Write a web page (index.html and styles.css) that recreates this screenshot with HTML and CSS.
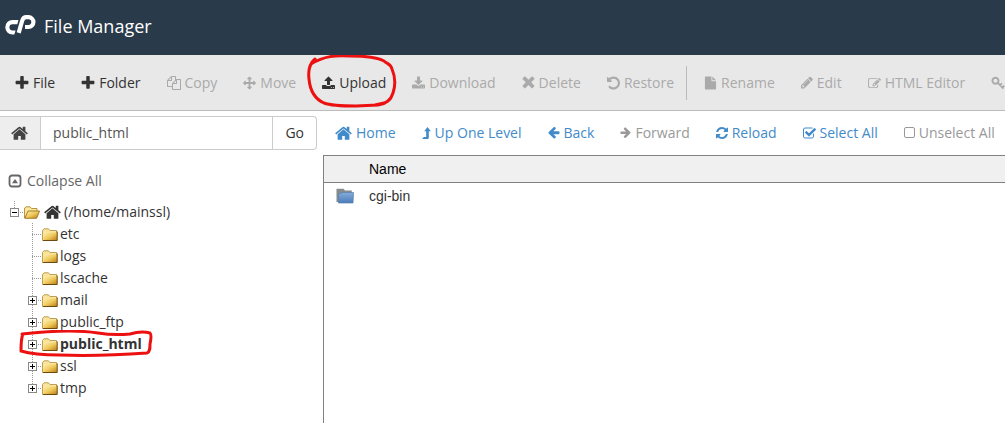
FILE: index.html
```html
<!DOCTYPE html>
<html lang="en">
<head>
<meta charset="utf-8">
<title>File Manager</title>
<link rel="stylesheet" href="styles.css">
</head>
<body>
<svg class="sprite" aria-hidden="true">
  <defs>
    <linearGradient id="gold" x1="0" y1="0" x2="1" y2="1"><stop offset="0" stop-color="#fff0ae"/><stop offset=".5" stop-color="#efc95c"/><stop offset="1" stop-color="#b97c12"/></linearGradient>
    <linearGradient id="blue" x1="0" y1="0" x2="0" y2="1"><stop offset="0" stop-color="#86acd8"/><stop offset="1" stop-color="#4a7cba"/></linearGradient>
  </defs>
  <symbol id="plus" viewBox="128 128 1536 1536"><path d="M1600 736v192q0 40-28 68t-68 28h-416v416q0 40-28 68t-68 28h-192q-40 0-68-28t-28-68v-416h-416q-40 0-68-28t-28-68v-192q0-40 28-68t68-28h416v-416q0-40 28-68t68-28h192q40 0 68 28t28 68v416h416q40 0 68 28t28 68z"/></symbol>
  <symbol id="home" viewBox="64 100 1664 1536"><path d="M1472 992v480q0 26-19 45t-45 19h-384v-384h-256v384h-384q-26 0-45-19t-19-45v-480q0-1 .5-3t.5-3l575-474 575 474q1 2 1 6zm223-69l-62 74q-8 9-21 11h-3q-13 0-21-7l-692-577-692 577q-12 8-24 7-13-2-21-11l-62-74q-8-10-7-23.500t11-21.500l719-599q32-26 76-26t76 26l244 204v-195q0-14 9-23t23-9h192q14 0 23 9t9 23v408l219 182q10 8 11 21.500t-7 23.500z"/></symbol>
  <symbol id="copy" viewBox="0 0 1792 1792"><path d="M1696 384q40 0 68 28t28 68v1216q0 40-28 68t-68 28h-960q-40 0-68-28t-28-68v-288h-544q-40 0-68-28t-28-68v-672q0-40 20-88t48-76l408-408q28-28 76-48t88-20h416q40 0 68 28t28 68v328q68-40 128-40h416zm-544 213l-299 299h299v-299zm-640-384l-299 299h299v-299zm196 647l316-316v-416h-384v416q0 40-28 68t-68 28h-416v640h512v-256q0-40 20-88t48-76zm956 804v-1152h-384v416q0 40-28 68t-68 28h-416v640h896z"/></symbol>
  <symbol id="move" viewBox="0 0 1792 1792"><path d="M1792 896q0 26-19 45l-256 256q-19 19-45 19t-45-19-19-45v-128h-384v384h128q26 0 45 19t19 45-19 45l-256 256q-19 19-45 19t-45-19l-256-256q-19-19-19-45t19-45 45-19h128v-384h-384v128q0 26-19 45t-45 19-45-19l-256-256q-19-19-19-45t19-45l256-256q19-19 45-19t45 19 19 45v128h384v-384h-128q-26 0-45-19t-19-45 19-45l256-256q19-19 45-19t45 19l256 256q19 19 19 45t-19 45-45 19h-128v384h384v-128q0-26 19-45t45-19 45 19l256 256q19 19 19 45z"/></symbol>
  <symbol id="upload" viewBox="64 64 1664 1664"><path d="M1344 1472q0-26-19-45t-45-19-45 19-19 45 19 45 45 19 45-19 19-45zm256 0q0-26-19-45t-45-19-45 19-19 45 19 45 45 19 45-19 19-45zm128-224v320q0 40-28 68t-68 28h-1472q-40 0-68-28t-28-68v-320q0-40 28-68t68-28h427q21 56 70.500 92t110.500 36h256q61 0 110.500-36t70.500-92h427q40 0 68 28t28 68zm-325-648q-17 40-59 40h-256v448q0 26-19 45t-45 19h-256q-26 0-45-19t-19-45v-448h-256q-42 0-59-40-17-39 14-69l448-448q18-19 45-19t45 19l448 448q31 30 14 69z"/></symbol>
  <symbol id="download" viewBox="64 0 1664 1664"><path d="M1344 1344q0-26-19-45t-45-19-45 19-19 45 19 45 45 19 45-19 19-45zm256 0q0-26-19-45t-45-19-45 19-19 45 19 45 45 19 45-19 19-45zm128-224v320q0 40-28 68t-68 28h-1472q-40 0-68-28t-28-68v-320q0-40 28-68t68-28h465l135 136q58 56 136 56t136-56l136-136h464q40 0 68 28t28 68zm-325-569q17 41-14 70l-448 448q-18 19-45 19t-45-19l-448-448q-31-29-14-70 17-39 59-39h256v-448q0-26 19-45t45-19h256q26 0 45 19t19 45v448h256q42 0 59 39z"/></symbol>
  <symbol id="times" viewBox="240 372 1312 1312"><path d="M1490 1322q0 40-28 68l-136 136q-28 28-68 28t-68-28l-294-294-294 294q-28 28-68 28t-68-28l-136-136q-28-28-28-68t28-68l294-294-294-294q-28-28-28-68t28-68l136-136q28-28 68-28t68 28l294 294 294-294q28-28 68-28t68 28l136 136q28 28 28 68t-28 68l-294 294 294 294q28 28 28 68z"/></symbol>
  <symbol id="undo" viewBox="128 128 1536 1536"><path d="M1664 896q0 156-61 298t-164 245-245 164-298 61q-172 0-327-72.500t-264-204.500q-7-10-6.500-22.500t8.500-20.500l137-138q10-9 25-9 16 2 23 12 73 95 179 147t225 52q104 0 198.500-40.500t163.500-109.500 109.500-163.500 40.500-198.500-40.500-198.500-109.500-163.500-163.500-109.500-198.500-40.500q-98 0-188 35.500t-160 101.500l137 138q31 30 14 69-17 40-59 40h-448q-26 0-45-19t-19-45v-448q0-42 40-59 39-17 69 14l130 129q107-101 244.500-156.500t284.500-55.500q156 0 298 61t245 164 164 245 61 298z"/></symbol>
  <symbol id="file" viewBox="0 0 14 14"><path d="M1.700 0H8v4.200q0 .8.800.8H13v8.300q0 .7-.7.700H1.700q-.7 0-.7-.7V.7Q1 0 1.700 0zM9 0l4 4H9z"/></symbol>
  <symbol id="pencil" viewBox="128 192 1536 1536"><path d="M491 1536l91-91-235-235-91 91v107h128v128h107zm523-928q0-22-22-22-10 0-17 7l-542 542q-7 7-7 17 0 22 22 22 10 0 17-7l542-542q7-7 7-17zm-54-192l416 416-832 832h-416v-416zm683 96q0 53-37 90l-166 166-416-416 166-165q36-38 90-38 53 0 91 38l235 234q37 39 37 91z"/></symbol>
  <symbol id="compose" viewBox="0 0 1792 1664"><path d="M888 1184l116-116-152-152-116 116v56h96v96h56zm440-720q-16-16-33 1l-350 350q-17 17-1 33t33-1l350-350q17-17 1-33zm80 594v190q0 119-84.500 203.500t-203.500 84.500h-832q-119 0-203.500-84.500t-84.500-203.500v-832q0-119 84.500-203.500t203.500-84.500h832q63 0 117 25 15 7 18 23 3 17-9 29l-49 49q-14 14-32 8-23-6-45-6h-832q-66 0-113 47t-47 113v832q0 66 47 113t113 47h832q66 0 113-47t47-113v-126q0-13 9-22l64-64q15-15 35-7t20 29zm-96-738l288 288-672 672h-288v-288zm444 132l-92 92-288-288 92-92q28-28 68-28t68 28l152 152q28 28 28 68t-28 68z"/></symbol>
  <symbol id="key" viewBox="0 0 14 14"><path d="M4.500 1.800a3 3 0 1 1-.1 0zM6.800 6.900l5.700 5.600M9 9.300l1.900-1.900M11.300 11.600l1.900-1.900" fill="none" stroke="currentColor" stroke-width="1.900"/></symbol>
  <symbol id="level-up" viewBox="0 0 9 14"><path d="M0 13h5.500q1.300 0 1.300-1.300V5.200h2L5.500 1 2.200 5.200h2V11H1.800z"/></symbol>
  <symbol id="arrow-left" viewBox="128 200 1600 1600"><path d="M1664 896v128q0 53-32.500 90.500t-84.500 37.500h-704l293 294q38 36 38 90t-38 90l-75 76q-37 37-90 37-52 0-91-37l-651-652q-37-37-37-90 0-52 37-91l651-650q38-38 91-38 52 0 90 38l75 74q38 38 38 91t-38 91l-293 293h704q52 0 84.500 37.500t32.500 90.500z"/></symbol>
  <symbol id="refresh" viewBox="128 128 1536 1536"><path d="M1639 1056q0 5-1 7-64 268-268 434.500t-478 166.500q-146 0-282.500-55t-243.500-157l-129 129q-19 19-45 19t-45-19-19-45v-448q0-26 19-45t45-19h448q26 0 45 19t19 45-19 45l-137 137q71 66 161 102t187 36q134 0 250-65t186-179q11-17 53-117 8-23 30-23h192q13 0 22.500 9.500t9.500 22.500zm25-800v448q0 26-19 45t-45 19h-448q-26 0-45-19t-19-45 19-45l138-138q-148-137-349-137-134 0-250 65t-186 179q-11 17-53 117-8 23-30 23h-199q-13 0-22.500-9.500t-9.500-22.500v-7q65-268 270-434.500t480-166.500q146 0 284 55.500t245 156.500l130-129q19-19 45-19t45 19 19 45z"/></symbol>
  <symbol id="checked" viewBox="64 64 1664 1536"><path d="M1472 930v318q0 119-84.500 203.500t-203.500 84.500h-832q-119 0-203.500-84.500t-84.500-203.500v-832q0-119 84.500-203.500t203.500-84.500h832q63 0 117 25 15 7 18 23 3 17-9 29l-49 49q-10 10-23 10-3 0-9-2-23-6-45-6h-832q-66 0-113 47t-47 113v832q0 66 47 113t113 47h832q66 0 113-47t47-113v-254q0-13 9-22l64-64q10-10 23-10 6 0 12 3 20 8 20 29zm231-489l-814 814q-24 24-57 24t-57-24l-430-430q-24-24-24-57t24-57l110-110q24-24 57-24t57 24l263 263 647-647q24-24 57-24t57 24l110 110q24 24 24 57t-24 57z"/></symbol>
  <symbol id="unchecked" viewBox="0 0 11 14"><rect x=".5" y="1.500" width="10" height="10" rx="1.500" fill="none" stroke="currentColor"/></symbol>
  <symbol id="collapse" viewBox="0 0 14 14"><rect x="1.500" y="1.500" width="11" height="11" rx="2.500" fill="none" stroke="currentColor" stroke-width="1.800"/><path d="M4 9.200h6L7 5z"/></symbol>
  <symbol id="folder" viewBox="0 0 16 13"><path d="M.5 12.500v-10L2 .8h4.500L8 2.500h6.500v10z" fill="#f7e49f" stroke="#b48a2c" stroke-width=".8"/><path d="M1.500 4.500h13.700v7.900H1.500z" fill="url(#gold)"/><path d="M15.200 3.500v9H1" fill="none" stroke="#6d4a10"/></symbol>
  <symbol id="folder-open" viewBox="0 0 16 13"><path d="M.5 12V2L2 .8h4L7.500 2.500H13V6" fill="#f9e7a0" stroke="#b48a2c" stroke-width=".9"/><path d="M.8 12.300L4 5h11.600l-3 7.300z" fill="url(#gold)" stroke="#9c741e" stroke-width=".9"/></symbol>
  <symbol id="folder-blue" viewBox="0 0 18 16"><path d="M.5 14V.8h7L9 2.500h6.800V14z" fill="#858b8f"/><path d="M2.500 15V6l4.500-1.500h10.600L17 15z" fill="url(#blue)" stroke="#5781b1" stroke-width=".7"/></symbol>
</svg>

<header class="masthead">
  <svg class="logo" viewBox="0 0 31 20" role="img" aria-label="cPanel"><path d="M13.500 5L12.300 9.200H7.500a3 3 0 0 0 0 6.200H10.600L9.300 19.500H7.500a7.250 7.250 0 0 1 0-14.500z" fill="#fff"/><path d="M13.700 17.800L17.100 6Q18.200 2.200 21.300 2.200h2.200a4.900 4.900 0 0 1 0 9.800H20" fill="none" stroke="#fff" stroke-width="4.200"/></svg>
  <h1>File Manager</h1>
</header>

<nav class="toolbar" aria-label="File actions">
  <button><svg class="icon"><use href="#plus"/></svg>File</button>
  <button><svg class="icon"><use href="#plus"/></svg>Folder</button>
  <button disabled><svg class="icon"><use href="#copy"/></svg>Copy</button>
  <button disabled><svg class="icon medium"><use href="#move"/></svg>Move</button>
  <button class="marked"><svg class="icon medium"><use href="#upload"/></svg>Upload
    <svg class="mark mark-upload" viewBox="0 0 90 54"><path d="M8 5C2 10 1 17 2 25c1 11 6 20 15 24 8 3 20 3 32 3l22-1c8-1 13-5 15-12 3-9 2-17-1-24-2-6-5-5-8-8C70 3 57 2 43 2 29 1 17 2 4 10M68 51l9-2"/></svg>
  </button>
  <button disabled><svg class="icon medium"><use href="#download"/></svg>Download</button>
  <button disabled><svg class="icon medium"><use href="#times"/></svg>Delete</button>
  <button disabled><svg class="icon medium"><use href="#undo"/></svg>Restore</button>
  <span class="divider"></span>
  <button disabled><svg class="icon medium"><use href="#file"/></svg>Rename</button>
  <button disabled><svg class="icon small"><use href="#pencil"/></svg>Edit</button>
  <button disabled><svg class="icon medium"><use href="#compose"/></svg>HTML Editor</button>
  <button disabled aria-label="Permissions"><svg class="icon"><use href="#key"/></svg></button>
</nav>

<div class="workspace">
  <aside class="sidebar">
    <form class="path">
      <label for="path" aria-label="Path"><svg class="icon wide"><use href="#home"/></svg></label>
      <input id="path" type="text" value="public_html">
      <button type="button">Go</button>
    </form>
    <button class="collapse"><svg class="icon"><use href="#collapse"/></svg>Collapse All</button>
    <div class="tree">
      <a class="root" href="#"><span class="toggle minus"></span><span class="dots"></span><svg class="folder"><use href="#folder-open"/></svg><svg class="icon wide"><use href="#home"/></svg>(/home/mainssl)</a>
      <ul>
        <li><a href="#"><span class="toggle leaf"></span><span class="dots"></span><svg class="folder"><use href="#folder"/></svg>etc</a></li>
        <li><a href="#"><span class="toggle leaf"></span><span class="dots"></span><svg class="folder"><use href="#folder"/></svg>logs</a></li>
        <li><a href="#"><span class="toggle leaf"></span><span class="dots"></span><svg class="folder"><use href="#folder"/></svg>lscache</a></li>
        <li><a href="#"><span class="toggle"></span><span class="dots"></span><svg class="folder"><use href="#folder"/></svg>mail</a></li>
        <li><a href="#"><span class="toggle"></span><span class="dots"></span><svg class="folder"><use href="#folder"/></svg>public_ftp</a></li>
        <li class="marked"><a class="current" href="#"><span class="toggle"></span><span class="dots"></span><svg class="folder"><use href="#folder"/></svg>public_html</a>
          <svg class="mark mark-folder" viewBox="0 0 136 28"><path d="M4 4C2 8 2 15 2 21c10 3 22 4 38 4 30 1 60 0 88-2 3-1 3-5 3-9 1-5 2-9 0-11-8-2-13-1-20 1-10 1-20 1-32-1C60 0 30 1 3 4"/></svg></li>
        <li><a href="#"><span class="toggle"></span><span class="dots"></span><svg class="folder"><use href="#folder"/></svg>ssl</a></li>
        <li><a href="#"><span class="toggle"></span><span class="dots"></span><svg class="folder"><use href="#folder"/></svg>tmp</a></li>
      </ul>
    </div>
  </aside>

  <main class="content">
    <nav class="actions" aria-label="Navigation">
      <button><svg class="icon wide"><use href="#home"/></svg>Home</button>
      <button><svg class="icon slim"><use href="#level-up"/></svg>Up One Level</button>
      <button><svg class="icon small"><use href="#arrow-left"/></svg>Back</button>
      <button disabled><svg class="icon tiny flip"><use href="#arrow-left"/></svg>Forward</button>
      <button><svg class="icon small"><use href="#refresh"/></svg>Reload</button>
      <button><svg class="icon medium"><use href="#checked"/></svg>Select All</button>
      <button disabled><svg class="icon tiny"><use href="#unchecked"/></svg>Unselect All</button>
    </nav>
    <div class="listing">
      <table>
        <thead><tr><th class="type"></th><th>Name</th></tr></thead>
        <tbody><tr><td class="type"><svg class="entry"><use href="#folder-blue"/></svg></td><td>cgi-bin</td></tr></tbody>
      </table>
    </div>
  </main>
</div>
</body>
</html>
```

FILE: styles.css
```css
* { box-sizing: border-box; }

body {
  margin: 0;
  min-height: 100vh;
  display: flex;
  flex-direction: column;
  overflow-x: hidden;
  background: #fff;
  color: #333;
  font: 14px/20px "Open Sans", sans-serif;
}

button, input { font: inherit; color: inherit; }

button {
  display: flex;
  align-items: center;
  gap: 4px;
  flex: none;
  padding: 0;
  border: 0;
  background: none;
  white-space: nowrap;
}

a { color: inherit; text-decoration: none; }

.sprite { position: absolute; width: 0; height: 0; }
.icon { flex: none; width: 14px; height: 14px; fill: currentColor; }
.icon.wide { width: 17px; height: 16px; }
.icon.medium { width: 13px; }
.icon.small { width: 12px; }
.icon.tiny { width: 11px; }
.icon.slim { width: 9px; }
.flip { transform: scaleX(-1); }

.masthead {
  display: flex;
  align-items: center;
  gap: 8px;
  height: 55px;
  padding: 0 5px 4px;
  background: #293a4a;
  color: #fff;
}
.logo { width: 31px; height: 20px; margin-bottom: 2px; }
h1 { margin: 0; font-size: 18px; line-height: 24px; font-weight: 400; }

.toolbar {
  display: flex;
  align-items: center;
  gap: 26px;
  height: 56px;
  padding-left: 15px;
  overflow: hidden;
  background: #e8e8e8;
  border-bottom: 1px solid #bbb;
}
.toolbar button:disabled { color: #aaa; }
.divider { flex: none; width: 1px; height: 34px; margin: 0 -9px 0 -14px; background: #bbb; }

.marked { position: relative; }
.mark { position: absolute; fill: none; stroke: #ec1010; stroke-width: 3; stroke-linecap: round; stroke-linejoin: round; }
.mark-upload { left: -15px; top: -19px; width: 90px; height: 54px; }
.mark-folder { left: 18px; top: -3px; width: 138px; height: 28px; }

.workspace { flex: 1; display: grid; grid-template-columns: 323px minmax(0, 1fr); }

.path {
  display: flex;
  height: 34px;
  margin: 5px 6px 0 0;
  border: 1px solid #ccc;
  border-left: 0;
  border-radius: 0 4px 4px 0;
}
.path label { display: flex; align-items: center; padding: 0 12px 0 11px; background: #eee; border-right: 1px solid #ccc; color: #444; }
.path input { flex: 1; min-width: 0; padding: 0 12px; border: 0; color: #555; }
.path button { padding: 0 12px; border-left: 1px solid #ccc; }

.collapse { margin: 21px 0 0 8px; color: #666; }
.sidebar .collapse { gap: 5px; }

.tree { margin-top: 10px; }
.tree ul { margin: 0; padding: 0; list-style: none; }
.tree a { display: flex; align-items: center; height: 22px; padding-left: 28px; background: repeating-linear-gradient(#999 0 1px, transparent 1px 2px) 32px 0 / 1px 22px no-repeat; }
.tree li:last-child a { background-size: 1px 11px; }
.tree a.root { gap: 0; padding-left: 10px; background-position: 14px 0; background-size: 1px 11px; }
.root .icon { margin: 0 3px 0 4px; }
.tree .current { font-weight: 700; }
.toggle {
  width: 9px;
  height: 9px;
  border: 1px solid #888;
  background: linear-gradient(#000, #000) center / 5px 1px no-repeat, linear-gradient(#000, #000) center / 1px 5px no-repeat, #fff;
}
.toggle.minus { background: linear-gradient(#000, #000) center / 5px 1px no-repeat, #fff; }
.toggle.leaf { border: 0; background: repeating-linear-gradient(90deg, #999 0 1px, transparent 1px 2px) 4px 4px / 5px 1px no-repeat; }
.dots { width: 5px; height: 1px; background: repeating-linear-gradient(90deg, transparent 0 1px, #999 1px 2px); }
.folder { flex: none; width: 16px; height: 13px; margin-right: 2px; }
.root .folder { margin-right: 0; }

.content { display: flex; flex-direction: column; min-width: 0; }
.actions { display: flex; align-items: center; gap: 26px; height: 44px; padding-left: 12px; overflow: hidden; color: #428bca; }
.actions button:disabled { color: #999; }

.listing { flex: 1; border: solid #808080; border-width: 1px 0 0 1px; }
table { width: 100%; border-collapse: collapse; font: 14px/20px "Liberation Sans", Arial, sans-serif; }
th { height: 26px; padding: 0; background: #f0f0f0; border-bottom: 1px solid #808080; color: #000; font-weight: 400; text-align: left; }
td { height: 28px; padding: 0; }
.type { width: 45px; }
.entry { display: block; width: 18px; height: 16px; margin-left: 12px; }
```
